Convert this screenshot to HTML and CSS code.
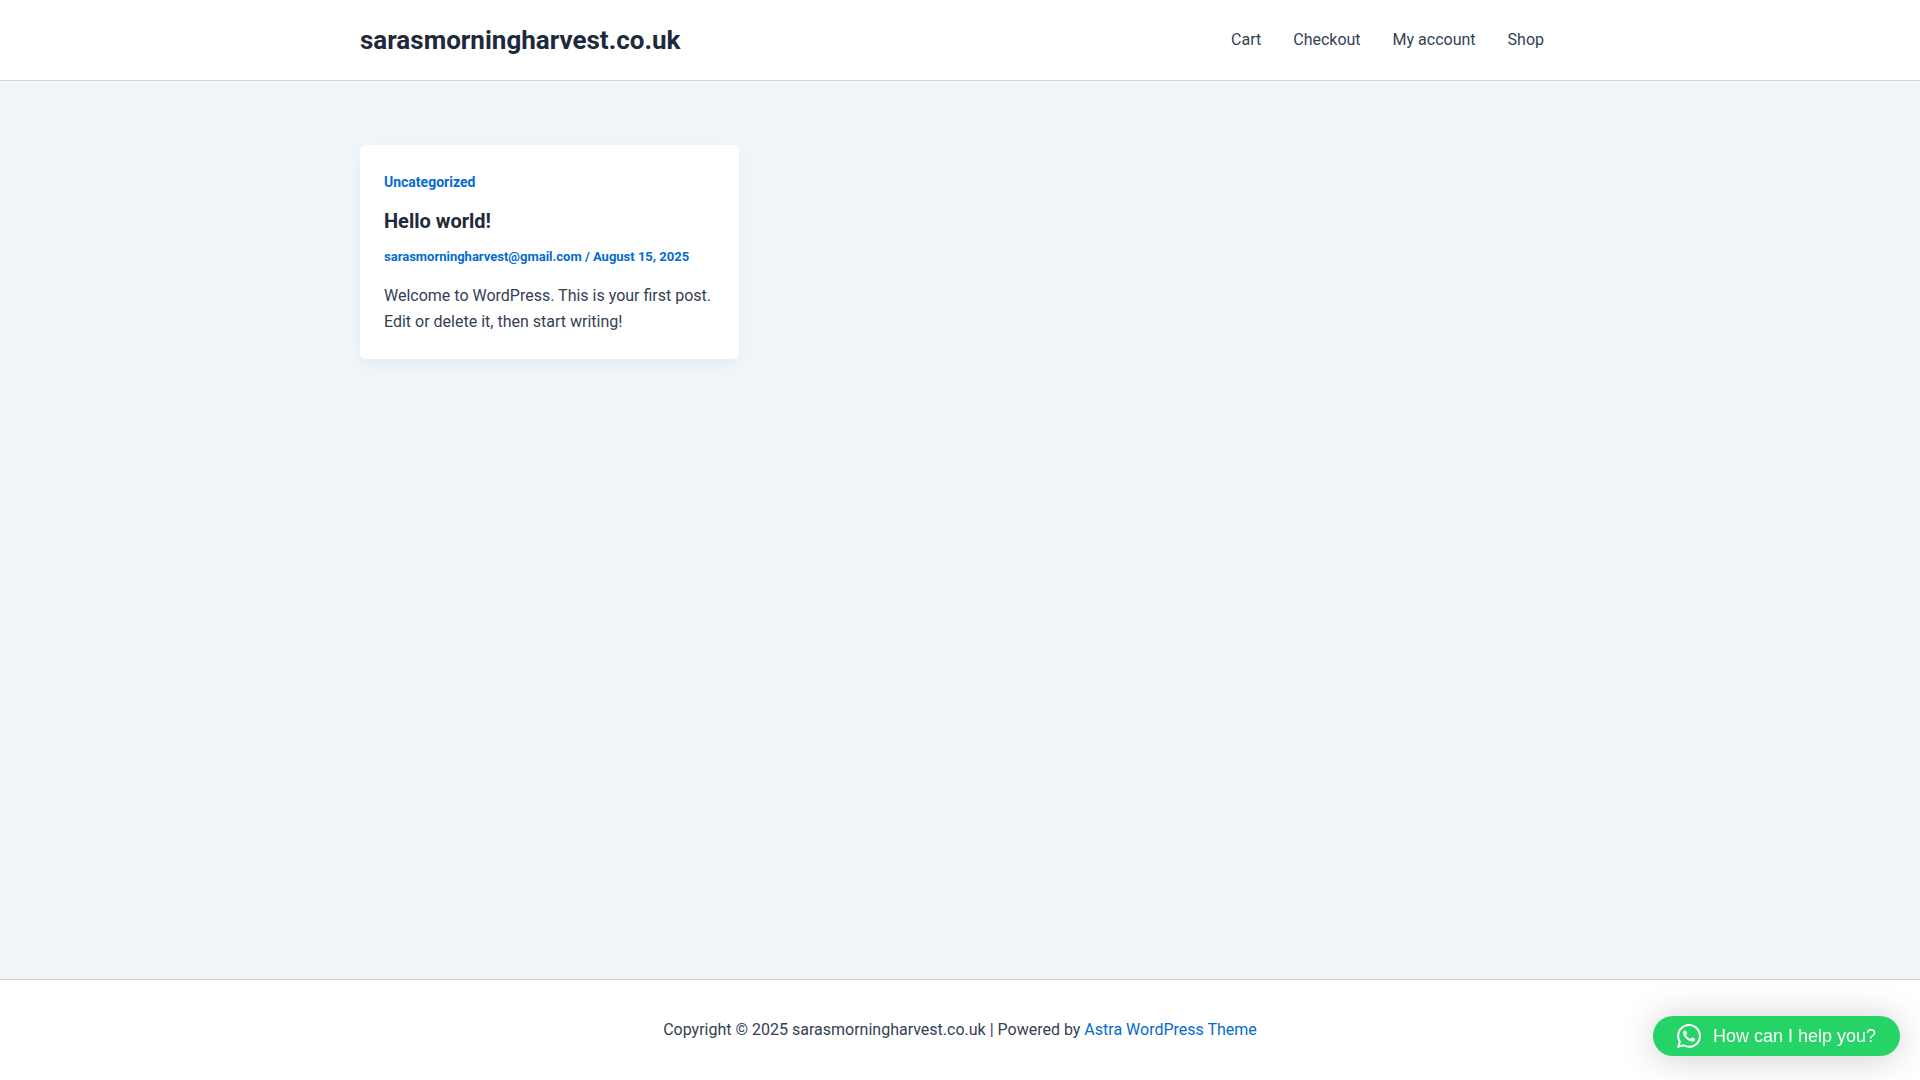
FILE: index.html
```html
<!DOCTYPE html>
<html lang="en">
<head>
<meta charset="utf-8">
<meta name="viewport" content="width=device-width, initial-scale=1">
<title>sarasmorningharvest.co.uk</title>
<link rel="stylesheet" href="styles.css">
</head>
<body>
<header class="site-header">
  <div class="container header-bar">
    <a class="site-title" href="#">sarasmorningharvest.co.uk</a>
    <nav class="menu" aria-label="Main">
      <a href="#">Cart</a>
      <a href="#">Checkout</a>
      <a href="#">My account</a>
      <a href="#">Shop</a>
    </nav>
  </div>
</header>
<main class="container posts">
  <article class="card">
    <a class="category" href="#">Uncategorized</a>
    <h2 class="post-title"><a href="#">Hello world!</a></h2>
    <div class="meta"><a href="#">sarasmorningharvest@gmail.com</a> / <span>August 15, 2025</span></div>
    <p class="excerpt">Welcome to WordPress. This is your first post. Edit or delete it, then start writing!</p>
  </article>
</main>
<footer class="site-footer">
  <p>Copyright © 2025 sarasmorningharvest.co.uk | Powered by <a href="#">Astra WordPress Theme</a></p>
</footer>
<button class="chat" type="button">
  <svg class="chat-icon" viewBox="0 0 24 24" aria-hidden="true"><path fill="currentColor" d="M17.472 14.382c-.297-.149-1.758-.867-2.03-.967-.273-.099-.471-.148-.67.15-.197.297-.767.966-.94 1.164-.173.199-.347.223-.644.075-.297-.15-1.255-.463-2.39-1.475-.883-.788-1.48-1.761-1.653-2.059-.173-.297-.018-.458.13-.606.134-.133.298-.347.446-.52.149-.174.198-.298.298-.497.099-.198.05-.371-.025-.52-.075-.149-.669-1.612-.916-2.207-.242-.579-.487-.5-.669-.51-.173-.008-.371-.01-.57-.01-.198 0-.52.074-.792.372-.272.297-1.04 1.016-1.04 2.479 0 1.462 1.065 2.875 1.213 3.074.149.198 2.096 3.2 5.077 4.487.709.306 1.262.489 1.694.625.712.227 1.36.195 1.871.118.571-.085 1.758-.719 2.006-1.413.248-.694.248-1.289.173-1.413-.074-.124-.272-.198-.57-.347m-5.421 7.403h-.004a9.87 9.87 0 01-5.031-1.378l-.361-.214-3.741.982.998-3.648-.235-.374a9.86 9.86 0 01-1.51-5.26c.001-5.45 4.436-9.884 9.888-9.884 2.64 0 5.122 1.03 6.988 2.898a9.825 9.825 0 012.893 6.994c-.003 5.45-4.437 9.884-9.885 9.884m8.413-18.297A11.815 11.815 0 0012.05 0C5.495 0 .16 5.335.157 11.892c0 2.096.547 4.142 1.588 5.945L.057 24l6.305-1.654a11.882 11.882 0 005.683 1.448h.005c6.554 0 11.89-5.335 11.893-11.893a11.821 11.821 0 00-3.48-8.413z"/></svg>
  <span>How can I help you?</span>
</button>
</body>
</html>
```
FILE: styles.css
```css
* { box-sizing: border-box; }
body {
  margin: 0;
  min-height: 100vh;
  display: flex;
  flex-direction: column;
  background: #f0f5fa;
  color: #334155;
  font: 16px/26px Roboto, sans-serif;
}
a { color: #046bd2; text-decoration: none; }
.container {
  width: 100%;
  max-width: 1240px;
  margin: 0 auto;
  padding: 0 20px;
}
.site-header { background: #fff; border-bottom: 1px solid #d1d5db; }
.header-bar {
  display: flex;
  align-items: center;
  justify-content: space-between;
  min-height: 80px;
}
.site-title { color: #1e293b; font-size: 26px; line-height: 31px; font-weight: 700; }
.menu { display: flex; gap: 32px; padding-right: 16px; }
.menu a { color: #334155; }
.posts {
  flex: 1;
  display: grid;
  grid-template-columns: repeat(3, 1fr);
  gap: 32px;
  align-items: start;
  padding-top: 64px;
  padding-bottom: 64px;
}
.card {
  padding: 24px;
  background: #fff;
  border-radius: 6px;
  box-shadow: 0 6px 15px -2px rgba(16, 24, 40, 0.05);
}
.category {
  display: block;
  font-size: 14px;
  line-height: 26px;
  font-weight: 700;
}
.post-title { margin: 12px 0 8px; font-size: 20px; line-height: 28px; font-weight: 700; }
.post-title a { color: #1e293b; }
.meta { color: #046bd2; font-size: 13px; line-height: 28px; font-weight: 700; }
.excerpt { margin: 12px 0 0; }
.site-footer {
  padding: 36px 20px;
  background: #fff;
  border-top: 1px solid #d1d5db;
  line-height: 28px;
  text-align: center;
}
.site-footer p { margin: 0; }
.chat {
  position: fixed;
  right: 20px;
  bottom: 24px;
  display: flex;
  align-items: center;
  gap: 12px;
  height: 40px;
  padding: 0 24px;
  border: 0;
  border-radius: 20px;
  background: #25d366;
  color: #fff;
  font: 18px/21px "Liberation Sans", sans-serif;
  box-shadow: 0 2px 36px rgba(0, 0, 0, 0.2);
}
.chat-icon { width: 24px; height: 24px; }
```
